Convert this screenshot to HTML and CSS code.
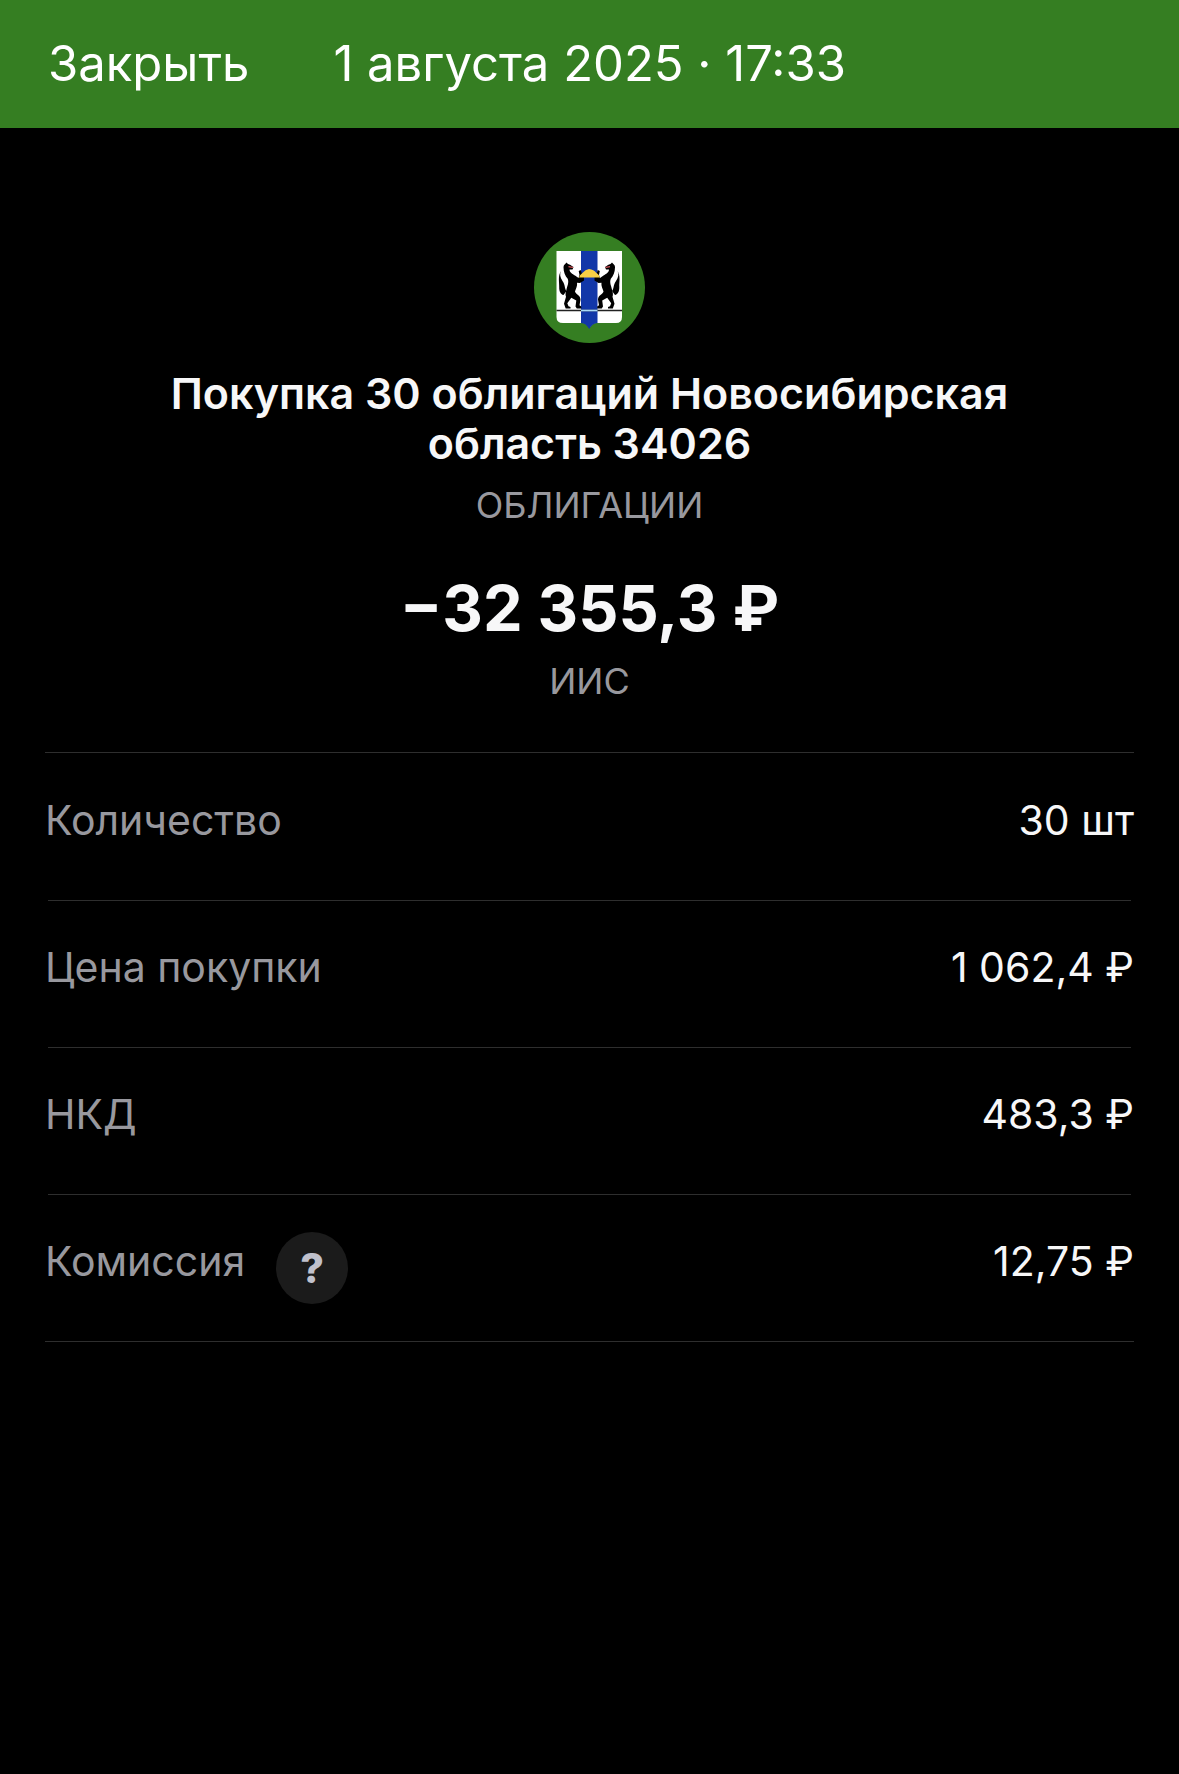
FILE: index.html
```
<!DOCTYPE html>
<html lang="ru">
<head>
    <meta charset="UTF-8">
    <meta name="viewport" content="width=device-width, initial-scale=1.0">
    <title>Покупка облигаций</title>
    <link rel="stylesheet" href="styles.css">
</head>
<body>
    <header class="topbar">
        <button type="button" class="close">Закрыть</button>
        <time class="date" datetime="2025-08-01T17:33">1 августа 2025 · 17:33</time>
    </header>

    <main class="content">
        <section class="summary">
            <svg class="logo" viewBox="0 0 111 111" role="img" aria-label="Новосибирская область">
                <circle cx="55.5" cy="55.5" r="55.5" fill="#357e22"/>
                <path d="M22.500 19h65.500v66q0 6-6 6H62q-4 0-6.500 5q-2.500-5-6.500-5H29q-6.500 0-6.500-6z" fill="#fff"/>
                <path d="M47 19h16.500v72q-5 0-8.300 6q-3.300-6-8.200-6z" fill="#1237a8"/>
                <path d="M22.500 78.500H88" stroke="#222" stroke-width="1.500"/>
                <path d="M47 78.500h16.500" stroke="#a9d9f5" stroke-width="1.700"/>
                <!-- соболь, второй отражён по горизонтали -->
                <g id="sable">
                    <path d="M29.500 35c0-2.500 2-3 3-4.500l1.500 1.500c2 .3 3 1.500 5.500 3l-1 2.500h-3c0 3 3 4.500 5.500 6l3.500 2.500l1-3l-.8-4l2-1l1.300 4l2 3v3.500l-4 2.500l-3-.3c.5 4-1.500 6-2 9c1.500 3 5.500 3.500 5.500 8l-1 5.500l1.800 1.200v2h-4.500l-1.300-2l.8-6l-5-2.700l-4 5.500l1.200 3l2 .7v1.500h-4.800l-1.700-4.700l2-7c-.8-2-.4-4 .2-6c1-5 3-8 1.500-12c-2.500-3-4.200-6.500-4.200-11.500z"/>
                    <path d="M27 39c-1.500 3-1 6 1.500 10c3 4.500 1.700 7 4 10l-3 4c-3-.5-4.500-4-4.300-8c.2-5-1.500-11 1.800-16z"/>
                    <path d="M34.500 34.700l4.500.8" stroke="#e0565c" stroke-width="1.200"/>
                </g>
                <use href="#sable" transform="translate(110.500 0) scale(-1 1)"/>
                <path d="M45 45.500q1-3 4-5q2-3 6-3.500q5 .5 7 3.500q3 2 4 5z" fill="#f8cf45"/>
            </svg>
            <h1 class="title">Покупка 30 облигаций Новосибирская область 34026</h1>
            <p class="caption">ОБЛИГАЦИИ</p>
            <p class="amount">−32 355,3 ₽</p>
            <p class="caption">ИИС</p>
        </section>

        <dl class="details">
            <div class="row">
                <dt><span class="text">Количество</span></dt>
                <dd class="text">30 шт</dd>
            </div>
            <div class="row">
                <dt><span class="text">Цена покупки</span></dt>
                <dd class="text">1 062,4 ₽</dd>
            </div>
            <div class="row">
                <dt><span class="text">НКД</span></dt>
                <dd class="text">483,3 ₽</dd>
            </div>
            <div class="row">
                <dt>
                    <span class="text">Комиссия</span>
                    <button type="button" class="help" aria-label="О комиссии">?</button>
                </dt>
                <dd class="text">12,75 ₽</dd>
            </div>
        </dl>
    </main>
</body>
</html>
```

FILE: styles.css
```
body {
    font-family: Inter, "Liberation Sans", sans-serif;
    margin: 0;
    background-color: #000;
    color: #f7f7f8;
}
button {
    border: 0;
    padding: 0;
    font-family: inherit;
    cursor: pointer;
}
.topbar {
    display: flex;
    align-items: center;
    gap: 84px;
    padding: 34px 48px;
    background-color: #357e22;
    color: #fff;
    font-size: 49px;
    line-height: 60px;
}
.close {
    background: none;
    color: inherit;
    font-size: inherit;
    line-height: inherit;
}
.content {
    padding: 104px 45px 0;
}
.summary {
    display: flex;
    flex-direction: column;
    align-items: center;
    text-align: center;
}
.logo {
    width: 111px;
    height: 111px;
}
.title {
    max-width: 880px;
    margin: 25px 0 12px;
    font-size: 43px;
    line-height: 50px;
    font-weight: 600;
}
.caption {
    margin: 0;
    color: #98989e;
    font-size: 36px;
    line-height: 50px;
}
.amount {
    margin: 38px 0 8px;
    font-size: 63px;
    line-height: 80px;
    font-weight: 700;
}
.details {
    margin: 46px 0 0;
    border-top: 1px solid #2e2e2e;
    border-bottom: 1px solid #2e2e2e;
}
.row {
    display: flex;
    justify-content: space-between;
    align-items: center;
    height: 147px;
    font-size: 41px;
    line-height: 50px;
}
/* inner dividers are a bit shorter than the outer ones */
.row + .row {
    background: linear-gradient(#2e2e2e, #2e2e2e) center top / calc(100% - 6px) 1px no-repeat;
}
.row dt {
    display: flex;
    align-items: center;
    gap: 31px;
    color: #98989e;
}
.row dd {
    margin: 0;
}
.text {
    padding-bottom: 14px;
}
.help {
    width: 72px;
    height: 72px;
    border-radius: 50%;
    background-color: #1b1b1b;
    color: #c0c1cc;
    font-size: 41px;
    font-weight: 800;
}
```
